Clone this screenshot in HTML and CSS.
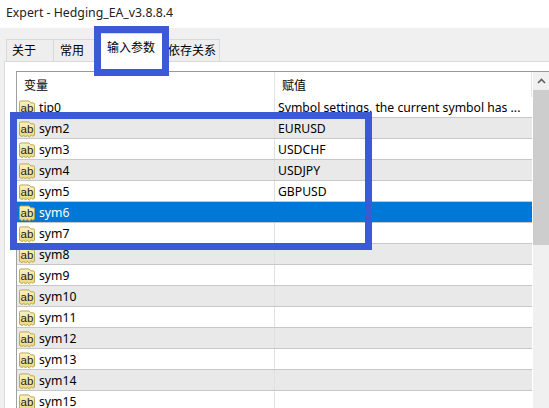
FILE: index.html
```html
<!DOCTYPE html>
<html lang="en">
<head>
    <meta charset="UTF-8">
    <meta name="viewport" content="width=device-width, initial-scale=1.0">
    <title>Expert - Hedging_EA_v3.8.8.4</title>
    <link rel="stylesheet" href="styles.css">
</head>
<body>
    <svg class="defs" width="0" height="0">
        <linearGradient id="paper-fill" x1="0" y1="0" x2="0" y2="1">
            <stop offset="0" stop-color="#fbf3bd"/>
            <stop offset="1" stop-color="#ecd67c"/>
        </linearGradient>
        <symbol id="paper" viewBox="0 0 17 17">
            <path d="M.5 2 Q.5 .5 2 .5 H10.500 L12.500 2.500 H15 Q16.500 2.500 16.500 4 V14.500 L14.500 15.500 L13 14.500 L11 16.500 L9 15 L7 16 L5 15 L3 16 L.5 14.500 Z" fill="url(#paper-fill)" stroke="#b8a24c"/>
        </symbol>
    </svg>

    <div class="titlebar">Expert - Hedging_EA_v3.8.8.4</div>

    <div class="dialog">
        <div class="tabs">
            <div class="tab">关于</div>
            <div class="tab">常用</div>
            <div class="tab active">输入参数</div>
            <div class="tab">依存关系</div>
        </div>

        <div class="panel">
            <div class="list">
                <div class="rows">
                    <div class="head">
                        <div class="col-name">变量</div>
                        <div class="col-value">赋值</div>
                    </div>
                    <div class="row"><div class="col-name"><span class="icon"><svg><use href="#paper"/></svg><span class="ab">ab</span></span>tip0</div><div class="col-value">Symbol settings, the current symbol has ...</div></div>
                    <div class="row"><div class="col-name"><span class="icon"><svg><use href="#paper"/></svg><span class="ab">ab</span></span>sym2</div><div class="col-value">EURUSD</div></div>
                    <div class="row"><div class="col-name"><span class="icon"><svg><use href="#paper"/></svg><span class="ab">ab</span></span>sym3</div><div class="col-value">USDCHF</div></div>
                    <div class="row"><div class="col-name"><span class="icon"><svg><use href="#paper"/></svg><span class="ab">ab</span></span>sym4</div><div class="col-value">USDJPY</div></div>
                    <div class="row"><div class="col-name"><span class="icon"><svg><use href="#paper"/></svg><span class="ab">ab</span></span>sym5</div><div class="col-value">GBPUSD</div></div>
                    <div class="row selected"><div class="col-name"><span class="icon"><svg><use href="#paper"/></svg><span class="ab">ab</span></span>sym6</div><div class="col-value"></div></div>
                    <div class="row"><div class="col-name"><span class="icon"><svg><use href="#paper"/></svg><span class="ab">ab</span></span>sym7</div><div class="col-value"></div></div>
                    <div class="row"><div class="col-name"><span class="icon"><svg><use href="#paper"/></svg><span class="ab">ab</span></span>sym8</div><div class="col-value"></div></div>
                    <div class="row"><div class="col-name"><span class="icon"><svg><use href="#paper"/></svg><span class="ab">ab</span></span>sym9</div><div class="col-value"></div></div>
                    <div class="row"><div class="col-name"><span class="icon"><svg><use href="#paper"/></svg><span class="ab">ab</span></span>sym10</div><div class="col-value"></div></div>
                    <div class="row"><div class="col-name"><span class="icon"><svg><use href="#paper"/></svg><span class="ab">ab</span></span>sym11</div><div class="col-value"></div></div>
                    <div class="row"><div class="col-name"><span class="icon"><svg><use href="#paper"/></svg><span class="ab">ab</span></span>sym12</div><div class="col-value"></div></div>
                    <div class="row"><div class="col-name"><span class="icon"><svg><use href="#paper"/></svg><span class="ab">ab</span></span>sym13</div><div class="col-value"></div></div>
                    <div class="row"><div class="col-name"><span class="icon"><svg><use href="#paper"/></svg><span class="ab">ab</span></span>sym14</div><div class="col-value"></div></div>
                    <div class="row"><div class="col-name"><span class="icon"><svg><use href="#paper"/></svg><span class="ab">ab</span></span>sym15</div><div class="col-value"></div></div>
                </div>
                <div class="scrollbar">
                    <div class="scroll-btn">
                        <svg width="9" height="6" viewBox="0 0 9 6"><path d="M1 5 L4.500 1.500 L8 5" fill="none" stroke="#606060" stroke-width="1.600"/></svg>
                    </div>
                    <div class="scroll-thumb"></div>
                </div>
            </div>
        </div>
    </div>

    <!-- Blue marks drawn over the screenshot -->
    <div class="mark mark-tab"></div>
    <div class="mark mark-rows"></div>
</body>
</html>
```

FILE: styles.css
```css
* {
    box-sizing: border-box;
}
body {
    margin: 0;
    width: 549px;
    height: 408px;
    overflow: hidden;
    position: relative;
    background-color: #fff;
    color: #000;
    font-family: "Noto Sans", "Noto Sans CJK SC", sans-serif;
    font-size: 12.2px;
}
.defs {
    position: absolute;
}
.titlebar {
    height: 28px;
    padding: 4px 0 0 6px;
    font-size: 12.3px;
    line-height: 18px;
    color: #222;
}
.dialog {
    height: 380px;
    padding-left: 4px;
    background-color: #f0f0f0;
}
.tabs {
    display: flex;
    align-items: flex-end;
    height: 33px;
    padding-left: 3px;
}
.tab {
    height: 22px;
    padding: 1px 6px 0;
    line-height: 20px;
    font-size: 12px;
    background-color: #eeeeee;
    border: 1px solid #d9d9d9;
    border-bottom: none;
    margin-left: -1px;
}
.tab:nth-child(1) {
    width: 48px;
    padding-left: 5px;
}
.tab:nth-child(2) {
    width: 48px;
}
.tab.active {
    width: 66px;
    height: 30px;
    margin-bottom: -2px;
    position: relative;
    padding: 4px 0 0 6px;
    background-color: #fff;
    z-index: 1;
}
.tab:nth-child(4) {
    width: 55px;
    padding: 1px 0 0 2px;
}
.panel {
    height: 347px;
    padding: 9px 0 0 11px;
    background-color: #fff;
    border-top: 1px solid #d9d9d9;
    border-left: 1px solid #d9d9d9;
}
.list {
    display: flex;
    height: 340px;
    border-top: 1px solid #999;
    border-left: 1px solid #a0a0a0;
}
.rows {
    width: 516px;
}
.head, .row {
    display: flex;
}
.head {
    height: 25px;
    line-height: 27px;
    font-size: 12px;
    border-right: 1px solid #e5e5e5;
}
.head .col-name {
    padding-left: 7px;
}
.head .col-value {
    padding-left: 7px;
    border-left: 1px solid #e5e5e5;
}
.row {
    height: 21px;
    line-height: 22px;
    border-bottom: 1px solid #c8c8c8;
}
.row:nth-child(even) {
    background-color: #fff;
}
.row:nth-child(odd) {
    background-color: #e9e9e9;
}
.row.selected {
    background-color: #0078d7;
    color: #fff;
}
.col-name {
    display: flex;
    align-items: flex-start;
    gap: 4px;
    width: 257px;
    padding-left: 2px;
}
.col-value {
    flex: 1;
    padding-left: 3px;
    white-space: nowrap;
    border-left: 1px solid #e0e0e0;
}
.row.selected .col-value {
    border-left-color: #0078d7;
}
.icon {
    display: grid;
    width: 16px;
    height: 17px;
    margin-top: 3px;
    flex: none;
}
.icon svg {
    grid-area: 1 / 1;
    width: 16px;
    height: 17px;
}
.ab {
    grid-area: 1 / 1;
    z-index: 1;
    text-align: center;
    font-family: "Liberation Sans", sans-serif;
    font-size: 11.500px;
    line-height: 16px;
    color: #222;
}
.scrollbar {
    width: 16px;
    margin-left: 1px;
    background-color: #f0f0f0;
}
.scroll-btn {
    display: flex;
    align-items: center;
    justify-content: center;
    height: 18px;
}
.scroll-thumb {
    height: 155px;
    background-color: #cdcdcd;
}
.mark {
    position: absolute;
    border: 7px solid #3b5bd5;
    z-index: 2;
}
.mark-tab {
    left: 94px;
    top: 26px;
    width: 75px;
    height: 50px;
}
.mark-rows {
    left: 10px;
    top: 112px;
    width: 362px;
    height: 138px;
}
```
